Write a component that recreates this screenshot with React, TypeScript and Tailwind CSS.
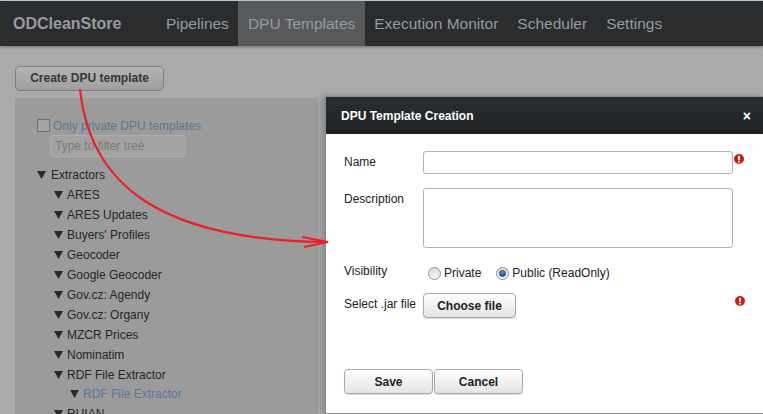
import React from 'react';

const navItems = ['Pipelines', 'DPU Templates', 'Execution Monitor', 'Scheduler', 'Settings'];

const extractors = [
  'ARES',
  'ARES Updates',
  "Buyers' Profiles",
  'Geocoder',
  'Google Geocoder',
  'Gov.cz: Agendy',
  'Gov.cz: Organy',
  'MZCR Prices',
  'Nominatim',
  'RDF File Extractor',
];

function Tri() {
  return (
    <svg width="9" height="8" viewBox="0 0 9 8" className="shrink-0">
      <path d="M0 0 H9 L4.5 8 Z" fill="#2a2a2a" />
    </svg>
  );
}

function ErrorIcon() {
  return (
    <svg width="10" height="10" viewBox="0 0 10 10" className="shrink-0">
      <circle cx="5" cy="5" r="5" fill="#d21c0e" />
      <rect x="4" y="1.8" width="2" height="4.2" rx="0.6" fill="#fff" />
      <rect x="4" y="6.8" width="2" height="1.6" rx="0.5" fill="#fff" />
    </svg>
  );
}

function Radio({ checked }: { checked?: boolean }) {
  return (
    <span className="w-[13px] h-[13px] rounded-full border border-[#8f8f8f] bg-gradient-to-b from-[#d9d9d9] to-[#f7f7f7] flex items-center justify-center shrink-0">
      {checked && <span className="w-[7px] h-[7px] rounded-full bg-gradient-to-b from-[#5fa6e0] to-[#0f4e8c] border border-[#1a3f66]" />}
    </span>
  );
}

function GrayButton({ children, className }: { children: React.ReactNode; className?: string }) {
  return (
    <button className={`h-[25px] rounded-[4px] border border-[#a8a8a8] bg-gradient-to-b from-[#ffffff] to-[#e4e4e4] shadow-[0_1px_1px_rgba(0,0,0,0.15)] text-[12px] font-bold text-[#222] ${className ?? ''}`}>
      {children}
    </button>
  );
}

export default function App() {
  return (
    <div className="relative w-[763px] h-[414px] overflow-hidden bg-[#a9aaab] font-['Liberation_Sans',Arial,sans-serif]">
      {/* top line */}
      <div className="h-px bg-[#c6d0da]" />

      {/* nav bar */}
      <div className="h-[45px] bg-[#2b2c2e] flex items-stretch shadow-[0_1px_3px_rgba(0,0,0,0.35)]">
        <div className="pl-[13px] pr-[35px] flex items-center text-[16px] font-bold text-[#979ba1]">ODCleanStore</div>
        {navItems.map((item) => (
          <div
            key={item}
            className={`px-[9.5px] flex items-center text-[15.5px] text-[#939ba4] ${item === 'DPU Templates' ? 'bg-[#58595b]' : ''}`}
          >
            {item}
          </div>
        ))}
      </div>

      {/* content */}
      <div className="px-[15px] pt-[19px]">
        <button className="h-[25px] w-[149px] rounded-[5px] border border-[#7e7e7e] bg-gradient-to-b from-[#b4b4b4] to-[#9f9f9f] text-[12px] font-bold text-[#373737]">
          Create DPU template
        </button>

        <div className="mt-[7px] w-[303px] h-[330px] bg-[#9b9b9b] pl-[22px] pt-[19px]">
          <div className="flex items-center gap-[3px]">
            <span className="w-[13px] h-[13px] border border-[#6f6f6f] bg-[#a3a3a3]" />
            <span className="text-[12px] text-[#5a7896]">Only private DPU templates</span>
          </div>
          <div className="ml-[13px] w-[136px] h-[22px] rounded-[3px] border border-[#acacac] bg-[#a2a2a2] flex items-center pl-[4px] text-[12px] text-[#7a7a7a]">
            Type to filter tree
          </div>
          <div className="mt-[8px] text-[12px] text-[#262626]">
            <div className="h-[20px] flex items-center gap-[5px]">
              <Tri />
              <span>Extractors</span>
            </div>
            {extractors.map((e) => (
              <div key={e} className="h-[20px] flex items-center gap-[4px] pl-[17px]">
                <Tri />
                <span>{e}</span>
              </div>
            ))}
            <div className="h-[19px] flex items-center gap-[4px] pl-[33px]">
              <Tri />
              <span className="text-[#5a7896]">RDF File Extractor</span>
            </div>
            <div className="h-[20px] flex items-center gap-[4px] pl-[17px]">
              <Tri />
              <span>RUIAN</span>
            </div>
          </div>
        </div>
      </div>

      {/* modal dialog */}
      <div className="absolute left-[325px] top-[96px] w-[440px] h-[318px] border border-[#8a8a8a] bg-white shadow-[-4px_0_6px_rgba(0,0,0,0.18)] flex flex-col">
        <div className="h-[37px] bg-gradient-to-b from-[#2b2e31] to-[#202326] flex items-center justify-between pl-[15px] pr-[13px] text-white">
          <span className="text-[12px] font-bold">DPU Template Creation</span>
          <span className="text-[14px] font-bold leading-none">×</span>
        </div>
        <div className="pl-[18px] pt-[17px] text-[12px] text-[#222] flex flex-col">
          <div className="flex">
            <span className="w-[79px] pt-[2px]">Name</span>
            <div className="w-[310px] h-[23px] rounded-[3px] border border-[#b5b5b5]" />
            <span className="ml-[1px] pt-[3px]"><ErrorIcon /></span>
          </div>
          <div className="flex mt-[14px]">
            <span className="w-[79px] pt-[2px]">Description</span>
            <div className="w-[310px] h-[60px] rounded-[3px] border border-[#b5b5b5]" />
          </div>
          <div className="flex items-center mt-[15px]">
            <span className="w-[84px] -mt-[3px]">Visibility</span>
            <span className="mt-px"><Radio /></span>
            <span className="ml-[3px] mt-px">Private</span>
            <span className="ml-[15px] mt-px"><Radio checked /></span>
            <span className="ml-[3px] mt-px">Public (ReadOnly)</span>
          </div>
          <div className="flex items-center mt-[11px]">
            <span className="w-[79px] -mt-[4px]">Select .jar file</span>
            <GrayButton className="w-[93px]">Choose file</GrayButton>
            <span className="ml-[219px] -mt-[9px]"><ErrorIcon /></span>
          </div>
          <div className="flex mt-[51px]">
            <GrayButton className="w-[89px]">Save</GrayButton>
            <GrayButton className="w-[89px] ml-px">Cancel</GrayButton>
          </div>
        </div>
      </div>

      {/* red annotation arrow */}
      <svg className="absolute inset-0 pointer-events-none" width="763" height="414" viewBox="0 0 763 414">
        <path d="M80 89 C 90 185 160 240 326 242" fill="none" stroke="#ea1f28" strokeWidth="2.2" />
        <path d="M302 237 L328 242 L304 247" fill="none" stroke="#ea1f28" strokeWidth="2.2" strokeLinejoin="miter" />
      </svg>
    </div>
  );
}
